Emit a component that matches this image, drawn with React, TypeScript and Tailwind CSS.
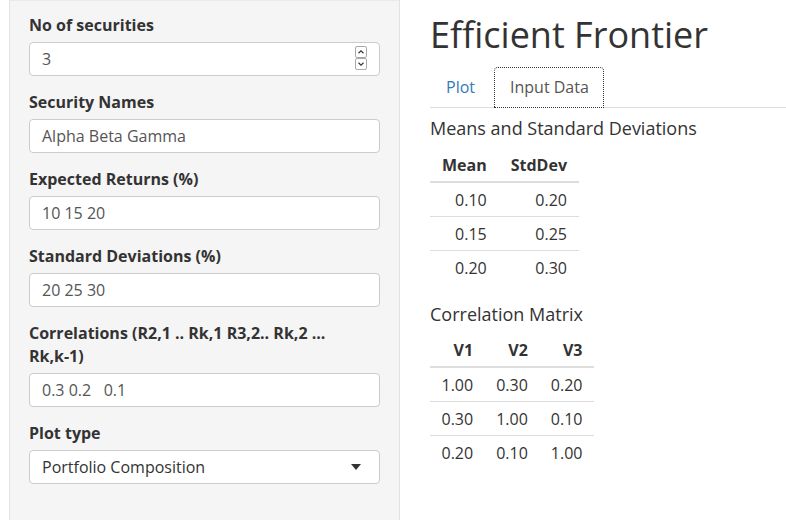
const MEANS = [
  ["0.10", "0.20"],
  ["0.15", "0.25"],
  ["0.20", "0.30"],
];

const CORR = [
  ["1.00", "0.30", "0.20"],
  ["0.30", "1.00", "0.10"],
  ["0.20", "0.10", "1.00"],
];

function Label({ children }: { children: React.ReactNode }) {
  return <label className="mb-[5px] block text-[16px] font-bold leading-[23px] text-[#333]">{children}</label>;
}

function TextInput({ value }: { value: string }) {
  return (
    <div className="mb-[15px] flex h-[34px] items-center rounded-[4px] border border-[#ccc] bg-white px-3 text-[16px] whitespace-pre text-[#555]">
      {value}
    </div>
  );
}

function Spinner() {
  return (
    <div className="absolute right-[13px] top-[4px] flex flex-col">
      {["M3 7.5 6 4.5 9 7.5", "M3 4.5 6 7.5 9 4.5"].map((d) => (
        <div key={d} className="flex h-[12px] w-[12px] items-center justify-center rounded-[2px] border border-[#a9a9a9] bg-white">
          <svg width="12" height="12" viewBox="0 0 12 12" fill="none" stroke="#333" strokeWidth={1.3}>
            <path d={d} />
          </svg>
        </div>
      ))}
    </div>
  );
}

function DataTable({ head, rows, pad }: { head: string[]; rows: string[][]; pad: string }) {
  return (
    <table className="border-collapse text-[16px]">
      <thead>
        <tr>
          {head.map((h) => (
            <th key={h} className={`h-[34px] border-b-2 border-[#ddd] text-right font-bold ${pad}`}>
              {h}
            </th>
          ))}
        </tr>
      </thead>
      <tbody>
        {rows.map((r, i) => (
          <tr key={i} className={i > 0 ? "border-t border-[#ddd]" : ""}>
            {r.map((c, j) => (
              <td key={j} className={`h-[34px] pt-px text-right ${pad}`}>
                {c}
              </td>
            ))}
          </tr>
        ))}
      </tbody>
    </table>
  );
}

export default function App() {
  return (
    <div className="flex h-[520px] w-[786px] overflow-hidden bg-white font-['Open_Sans',sans-serif] text-[#333]">
      <aside className="ml-[9px] w-[391px] shrink-0 border-x border-[#e3e3e3] bg-[#f5f5f5] px-[19px] pt-[14px] shadow-[inset_0_1px_1px_rgba(0,0,0,0.05)]">
        <Label>No of securities</Label>
        <div className="relative">
          <TextInput value="3" />
          <Spinner />
        </div>

        <Label>Security Names</Label>
        <TextInput value="Alpha Beta Gamma" />

        <Label>Expected Returns (%)</Label>
        <TextInput value="10 15 20" />

        <Label>Standard Deviations (%)</Label>
        <TextInput value="20 25 30" />

        <Label>
          <span className="whitespace-nowrap">Correlations (R2,1 .. Rk,1 R3,2.. Rk,2 ...</span>
          <br />
          Rk,k-1)
        </Label>
        <TextInput value="0.3 0.2   0.1" />

        <Label>Plot type</Label>
        <div className="relative flex h-[34px] items-center rounded-[4px] border border-[#ccc] bg-white px-3 text-[16px] text-[#333]">
          Portfolio Composition
          <svg className="absolute right-[18px] top-[13px]" width="10" height="6" viewBox="0 0 10 6">
            <path d="M0 0h10L5 6z" fill="#333" />
          </svg>
        </div>
      </aside>

      <main className="min-w-0 flex-1 pl-[30px]">
        <h1 className="mt-[15px] mb-[12px] text-[36px] leading-[40px] font-normal text-[#333]">Efficient Frontier</h1>

        <ul className="flex border-b border-[#ddd] text-[16px] leading-[23px]">
          <li className="-mb-px border border-transparent px-[15px] py-[8px] text-[#337ab7]">Plot</li>
          <li className="-mb-px ml-[3px] rounded-t-[4px] border border-dotted border-[#333] bg-white pl-[15px] pr-[14px] py-[8px] text-[#555]">
            Input Data
          </li>
        </ul>

        <h4 className="mt-[8px] mb-[8px] text-[18px] leading-[24px] font-normal">Means and Standard Deviations</h4>
        <DataTable head={["Mean", "StdDev"]} rows={MEANS} pad="px-[12px]" />

        <h4 className="mt-[18px] mb-[7px] text-[18px] leading-[24px] font-normal">Correlation Matrix</h4>
        <DataTable head={["V1", "V2", "V3"]} rows={CORR} pad="px-[11.5px]" />
      </main>
    </div>
  );
}
